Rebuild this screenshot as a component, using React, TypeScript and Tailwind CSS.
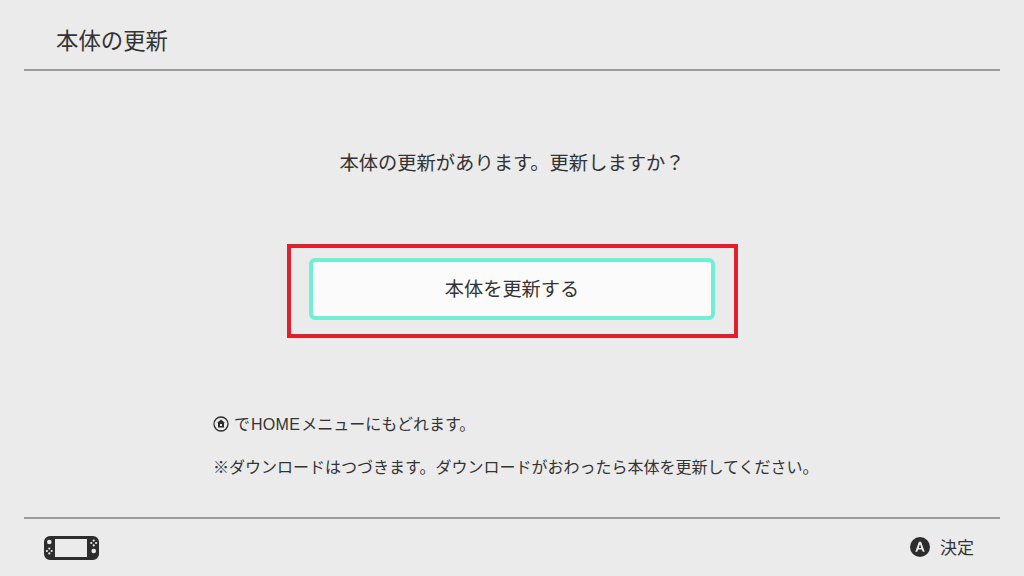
const fontStack = "font-['Noto_Sans_CJK_JP','Liberation_Sans',sans-serif]";

function ConsoleIcon() {
  return (
    <svg width="55" height="24" viewBox="0 0 55 24" aria-hidden>
      <path
        fillRule="evenodd"
        fill="#2d2d2d"
        d="M6 0h43a6 6 0 016 6v12a6 6 0 01-6 6H6a6 6 0 01-6-6V6a6 6 0 016-6zM11 3v18h32V3z"
      />
      <circle cx="5.3" cy="6" r="2.3" fill="#ebebeb" />
      <circle cx="5.3" cy="12.6" r="1.1" fill="#ebebeb" />
      <circle cx="2.9" cy="15" r="1.1" fill="#ebebeb" />
      <circle cx="7.7" cy="15" r="1.1" fill="#ebebeb" />
      <circle cx="5.3" cy="17.4" r="1.1" fill="#ebebeb" />
      <circle cx="49.7" cy="15" r="2.3" fill="#ebebeb" />
      <circle cx="49.7" cy="4.6" r="1.1" fill="#ebebeb" />
      <circle cx="47.3" cy="7" r="1.1" fill="#ebebeb" />
      <circle cx="52.1" cy="7" r="1.1" fill="#ebebeb" />
      <circle cx="49.7" cy="9.4" r="1.1" fill="#ebebeb" />
    </svg>
  );
}

function HomeIcon() {
  return (
    <svg width="16" height="16" viewBox="0 0 16 16" aria-hidden>
      <circle cx="8" cy="8" r="7" fill="none" stroke="#2d2d2d" strokeWidth="1.3" />
      <path fill="#2d2d2d" d="M8 3.6l4 3.4h-1v4.6H5V7H4z" />
      <rect x="7" y="8" width="2" height="2" fill="#ebebeb" />
    </svg>
  );
}

function AButtonIcon() {
  return (
    <svg width="20" height="20" viewBox="0 0 20 20" aria-hidden>
      <circle cx="10" cy="10" r="10" fill="#2d2d2d" />
      <path
        fill="#ebebeb"
        fillRule="evenodd"
        d="M8.9 4.8h2.2l3.6 10h-2l-.8-2.3H8.1l-.8 2.3h-2zM10 7.2L8.7 10.9h2.6z"
      />
    </svg>
  );
}

export default function App() {
  return (
    <div className={`${fontStack} flex h-[576px] w-[1024px] flex-col overflow-hidden bg-[#ebebeb] text-[#333333]`}>
      <header className="mx-6 flex h-[71px] shrink-0 items-center border-b-2 border-[#9b9b9b] pt-[10px] pl-8">
        <h1 className="text-[22.4px] leading-none font-normal">本体の更新</h1>
      </header>

      <main className="flex flex-1 flex-col">
        <p className="mt-[80px] text-center text-[19.3px] leading-[22px]">本体の更新があります。更新しますか？</p>

        <div className="mx-auto mt-[71px] box-border flex h-[94px] w-[451px] items-start justify-center border-4 border-[#e0202c] pt-[10px]">
          <button className="box-border flex h-[62px] w-[406px] items-center justify-center rounded-[6px] border-[4px] border-[#6ff0d4] bg-[#fbfbfb] text-[19.2px] leading-none">
            本体を更新する
          </button>
        </div>

        <div className="mt-[74px] ml-[213px] flex flex-col gap-[19px] text-[16px] leading-[22px]">
          <p className="flex items-center gap-[5px]">
            <HomeIcon />
            <span>
              で<span className="mx-[1px] font-['Liberation_Sans',sans-serif] tracking-[0.3px]">HOME</span>メニューにもどれます。
            </span>
          </p>
          <p>※ダウンロードはつづきます。ダウンロードがおわったら本体を更新してください。</p>
        </div>
      </main>

      <footer className="mx-6 flex h-[59px] shrink-0 items-center justify-between border-t-2 border-[#9b9b9b] pr-[26px] pl-5">
        <ConsoleIcon />
        <div className="flex items-center gap-[10px] pb-[2px] text-[17px] leading-none">
          <AButtonIcon />
          <span>決定</span>
        </div>
      </footer>
    </div>
  );
}
